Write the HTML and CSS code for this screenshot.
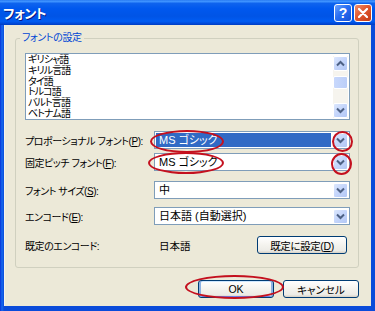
FILE: index.html
```html
<!DOCTYPE html>
<html lang="ja">
<head>
<meta charset="utf-8">
<title>フォント</title>
<link rel="stylesheet" href="styles.css">
</head>
<body>
<div class="window">
  <div class="titlebar">
    <span class="title">フォント</span>
    <div class="tb-buttons">
      <span class="tb-btn help">?</span>
      <span class="tb-btn close"><svg width="10" height="10" viewBox="0 0 10 10"><path d="M1 1 L9 9 M9 1 L1 9" stroke="#fff" stroke-width="2.2" stroke-linecap="round"/></svg></span>
    </div>
  </div>
  <div class="frame">
    <div class="client">
      <fieldset class="group">
        <legend>フォントの設定</legend>
        <div class="listbox">
          <ul class="items">
            <li>ギリシャ語</li>
            <li>キリル言語</li>
            <li>タイ語</li>
            <li>トルコ語</li>
            <li>バルト言語</li>
            <li>ベトナム語</li>
          </ul>
          <div class="vscroll">
            <span class="sbtn"><svg width="9" height="7" viewBox="0 0 9 7"><path d="M1 5.5 L4.5 2 L8 5.5" fill="none" stroke="#4D6185" stroke-width="2"/></svg></span>
            <span class="thumb"></span>
            <span class="track"></span>
            <span class="sbtn"><svg width="9" height="7" viewBox="0 0 9 7"><path d="M1 1.5 L4.5 5 L8 1.5" fill="none" stroke="#4D6185" stroke-width="2"/></svg></span>
          </div>
        </div>
        <div class="row r1">
          <span class="lbl">プロポーショナル フォント(<u>P</u>):</span>
          <div class="combo selected">
            <span class="val">MS ゴシック</span>
            <span class="drop"><svg width="9" height="7" viewBox="0 0 9 7"><path d="M1 1.5 L4.5 5 L8 1.5" fill="none" stroke="#4D6185" stroke-width="2"/></svg></span>
          </div>
        </div>
        <div class="row r2">
          <span class="lbl">固定ピッチ フォント(<u>F</u>):</span>
          <div class="combo">
            <span class="val">MS ゴシック</span>
            <span class="drop"><svg width="9" height="7" viewBox="0 0 9 7"><path d="M1 1.5 L4.5 5 L8 1.5" fill="none" stroke="#4D6185" stroke-width="2"/></svg></span>
          </div>
        </div>
        <div class="row r3">
          <span class="lbl">フォント サイズ(<u>S</u>):</span>
          <div class="combo">
            <span class="val">中</span>
            <span class="drop"><svg width="9" height="7" viewBox="0 0 9 7"><path d="M1 1.5 L4.5 5 L8 1.5" fill="none" stroke="#4D6185" stroke-width="2"/></svg></span>
          </div>
        </div>
        <div class="row r4">
          <span class="lbl">エンコード(<u>E</u>):</span>
          <div class="combo">
            <span class="val">日本語 (自動選択)</span>
            <span class="drop"><svg width="9" height="7" viewBox="0 0 9 7"><path d="M1 1.5 L4.5 5 L8 1.5" fill="none" stroke="#4D6185" stroke-width="2"/></svg></span>
          </div>
        </div>
        <div class="row r5">
          <span class="lbl">既定のエンコード:</span>
          <span class="enc">日本語</span>
          <button class="btn set">既定に設定(<u>D</u>)</button>
        </div>
      </fieldset>
      <div class="footer">
        <button class="btn ok default">OK</button>
        <button class="btn cancel">キャンセル</button>
      </div>
    </div>
  </div>
  <span class="mark m1"></span>
  <span class="mark m2"></span>
  <span class="mark m3"></span>
  <span class="mark m4"></span>
  <span class="mark m5"></span>
</div>
</body>
</html>
```
FILE: styles.css
```css
* { box-sizing: border-box; margin: 0; padding: 0; }
html, body { width: 375px; height: 311px; overflow: hidden; }
body {
  margin: 0;
  font-family: "Liberation Sans", "Noto Sans CJK JP", sans-serif;
  font-size: 10px;
  font-feature-settings: "palt";
  color: #000;
  background: #0A47D6;
}
.window {
  position: relative;
  width: 375px;
  height: 311px;
  display: flex;
  flex-direction: column;
  background: #0A4BDA;
}
.titlebar {
  height: 25px;
  flex: none;
  display: flex;
  align-items: center;
  justify-content: space-between;
  padding: 0 3px 0 3px;
  background: linear-gradient(to bottom, #2A7CF2 0%, #3D92FF 6%, #0E63EE 14%, #0058EE 35%, #0054E6 65%, #005CF2 85%, #0049D8 94%, #003DC0 100%);
}
.title {
  color: #fff;
  font-weight: bold;
  font-size: 13px;
  letter-spacing: -0.5px;
  text-shadow: 1px 1px 0 #0A1883;
  font-family: "Noto Sans CJK JP", sans-serif;
}
.tb-buttons { display: flex; gap: 2px; }
.tb-btn {
  width: 18px;
  height: 18px;
  border: 1px solid #fff;
  border-radius: 3px;
  display: flex;
  align-items: center;
  justify-content: center;
  color: #fff;
}
.help {
  background: linear-gradient(135deg, #6AA0FF 0%, #2A6FF2 45%, #1550D8 100%);
  font-weight: bold;
  font-size: 14px;
  font-family: "Liberation Sans", sans-serif;
}
.close {
  background: linear-gradient(135deg, #F09070 0%, #E2582F 45%, #C23A14 100%);
}
.frame {
  flex: 1;
  display: flex;
  padding: 0 4px 5px 4px;
  background: linear-gradient(to right, #0831D9, #166AEE 2px, #0A4BDA 4px);
}
.client {
  flex: 1;
  display: flex;
  flex-direction: column;
  background: #ECE9D8;
  padding: 7px 12px 0 10px;
  border-left: 1px solid #F4F3EE;
}
.group {
  border: 1px solid #D0D0BF;
  border-radius: 3px;
  padding: 9px 8px 13px 9px;
  min-width: 0;
}
.group legend {
  color: #0046D5;
  line-height: 12px;
  padding: 0 2px;
  margin-left: -5px;
  letter-spacing: -0.4px;
}
.listbox {
  height: 67px;
  border: 1px solid #7F9DB9;
  background: #fff;
  display: flex;
}
.items {
  flex: 1;
  list-style: none;
  padding: 0 2px 0 2px;
  font-size: 10px;
  line-height: 10.8px;
  letter-spacing: -0.9px;
  overflow: hidden;
  font-family: "Noto Sans CJK JP", sans-serif;
}
.items li { height: 10.8px; }
.vscroll {
  width: 15px;
  margin: 2px 1px 1px 0;
  display: flex;
  flex-direction: column;
  background: #F6F4EE;
}
.sbtn, .drop {
  width: 15px;
  height: 15px;
  flex: none;
  display: flex;
  align-items: center;
  justify-content: center;
  border: 1px solid #fff;
  border-radius: 2px;
  background: linear-gradient(135deg, #DCE7FD 0%, #C4D5FB 50%, #B2C7F5 100%);
}
.thumb {
  height: 13px;
  margin-top: 5px;
  flex: none;
  border: 1px solid #fff;
  border-radius: 2px;
  background: linear-gradient(to right, #C8D8FC, #BBCEF8);
}
.track { flex: 1; }
.row {
  display: flex;
  align-items: center;
}
.r1 { margin-top: 11px; }
.r2 { margin-top: 4px; }
.r3 { margin-top: 10px; }
.r4 { margin-top: 8px; }
.r5 { margin-top: 11px; }
.lbl { width: 126px; flex: none; white-space: nowrap; letter-spacing: -0.45px; }
.combo {
  margin-left: auto;
  width: 196px;
  height: 18px;
  border: 1px solid #7F9DB9;
  background: #fff;
  display: flex;
  align-items: center;
  padding: 1px;
  font-size: 11px;
}
.combo .val {
  flex: 1;
  height: 14px;
  line-height: 14px;
  padding-left: 3px;
  margin-right: 2px;
  white-space: nowrap;
}
.combo.selected .val {
  background: #316AC5;
  color: #fff;
}
.enc { margin-left: auto; width: 100px; padding-left: 2px; font-size: 10.5px; }
.btn {
  height: 18px;
  border: 1px solid #003C74;
  border-radius: 3px;
  background: linear-gradient(to bottom, #FFFFFF 0%, #F4F3EE 50%, #ECEBE6 85%, #D6D0C5 100%);
  font-family: "Liberation Sans", "Noto Sans CJK JP", sans-serif;
  font-size: 10.5px;
  font-feature-settings: "palt";
  color: #000;
}
.set { width: 90px; margin-right: 3px; letter-spacing: -0.4px; }
.footer {
  display: flex;
  justify-content: flex-end;
  gap: 9px;
  padding-top: 12px;
}
.ok, .cancel { width: 76px; }
.default {
  box-shadow: inset 2px 0 0 #8DB2E3, inset -2px 0 0 #8DB2E3, inset 0 1px 0 #CEE7FF, inset 0 -1px 0 #6982EE;
}
.mark {
  position: absolute;
  border: 2px solid #C4101E;
  border-radius: 50%;
}
.m1 { left: 150px; top: 130px; width: 74px; height: 23px; }
.m2 { left: 332px; top: 131px; width: 21px; height: 21px; }
.m3 { left: 148px; top: 152px; width: 76px; height: 22px; }
.m4 { left: 331px; top: 153px; width: 21px; height: 22px; }
.m5 { left: 185px; top: 275px; width: 99px; height: 24px; }
```
